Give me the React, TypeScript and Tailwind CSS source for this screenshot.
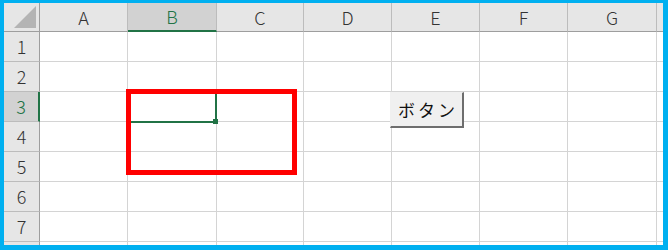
import React from "react";

const cols = ["A", "B", "C", "D", "E", "F", "G"];
const rows = [1, 2, 3, 4, 5, 6, 7];

export default function App() {
  return (
    <div
      className="w-[668px] h-[250px] bg-white border-[#00b0f0] border-t-[3px] border-l-[4px] border-r-[5px] border-b-[5px] overflow-hidden"
      style={{ fontFamily: '"Noto Sans CJK JP", "Liberation Sans", sans-serif' }}
    >
      <div className="relative w-full h-full">
        {/* Sheet grid */}
        <div className="grid grid-cols-[36px_88px_89px_87px_88px_88px_88px_89px_6px] grid-rows-[29px_repeat(7,30px)_3px] text-[18px] font-light">
          {/* Corner */}
          <div className="bg-[#e6e6e6] border-r border-b border-[#9e9e9e] relative">
            <svg className="absolute left-[10px] top-[3px]" width="22" height="22" viewBox="0 0 22 22">
              <polygon points="22,0 22,22 0,22" fill="#b4b4b4" />
            </svg>
          </div>
          {cols.map((c) => (
            <div
              key={c}
              className={
                c === "B"
                  ? "flex items-center justify-center bg-[#d2d2d2] border-r border-r-[#bcbcbc] border-b-2 border-b-[#217346] text-[#217346]"
                  : "flex items-center justify-center bg-[#e6e6e6] border-r border-r-[#bcbcbc] border-b border-b-[#9e9e9e] text-[#333]"
              }
            >
              {c}
            </div>
          ))}
          <div className="bg-[#e6e6e6] border-b border-b-[#9e9e9e]" />

          {rows.map((r) => (
            <React.Fragment key={r}>
              <div
                className={
                  r === 3
                    ? "flex items-center justify-center bg-[#d2d2d2] border-r-2 border-r-[#217346] border-b border-b-[#bcbcbc] text-[#217346]"
                    : "flex items-center justify-center bg-[#e6e6e6] border-r border-r-[#9e9e9e] border-b border-b-[#bcbcbc] text-[#333]"
                }
              >
                {r}
              </div>
              {cols.map((c) => (
                <div key={c} className="border-r border-b border-[#d4d4d4]" />
              ))}
              <div className="border-b border-[#d4d4d4]" />
            </React.Fragment>
          ))}

          {/* Partial row 8 */}
          <div className="bg-[#e6e6e6] border-r border-r-[#9e9e9e]" />
          {cols.map((c) => (
            <div key={c} className="border-r border-[#d4d4d4]" />
          ))}
          <div />
        </div>

        {/* Active cell B3 */}
        <div className="absolute left-[122px] top-[87px] w-[91px] h-[33px] border-2 border-[#217346]" />
        <div className="absolute left-[209px] top-[116px] w-[5px] h-[5px] bg-[#217346]" />

        {/* Red annotation box */}
        <div className="absolute left-[122px] top-[86px] w-[171px] h-[86px] border-[5px] border-[#ff0000]" />

        {/* Form button */}
        <button className="absolute left-[386px] top-[89px] w-[74px] h-[36px] bg-[#f0f0f0] border-t border-l border-[#f0f0f0] border-r-2 border-b-2 border-r-[#6e6e6e] border-b-[#6e6e6e] flex items-center justify-center pl-[3px] text-[17px] text-[#111] tracking-[3px]">
          ボタン
        </button>
      </div>
    </div>
  );
}
